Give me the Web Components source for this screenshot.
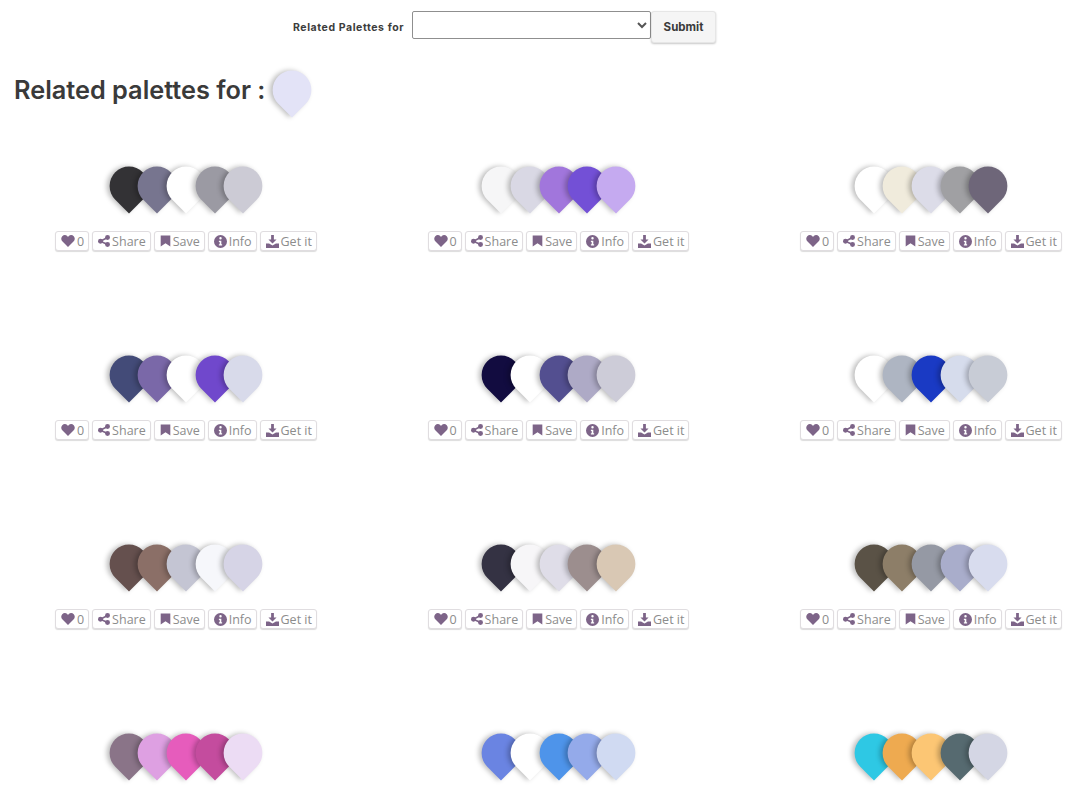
<!DOCTYPE html>
<html>
<head>
<meta charset="utf-8">
<title>Related palettes</title>
<style>
  html, body { margin: 0; padding: 0; background: #fff; overflow: hidden; height: 793px; }
</style>
</head>
<body>
<related-form></related-form>
<page-heading color="#e3e3f7">Related palettes for :</page-heading>
<palette-grid>
  <palette-card colors="#333235,#77758f,#ffffff,#9b9aa3,#cccbd5"></palette-card>
  <palette-card colors="#f6f6f7,#d9d8e4,#a176dc,#7350d6,#c5aaf0"></palette-card>
  <palette-card colors="#ffffff,#f0ebdc,#dcdce8,#a0a0a3,#6e6679"></palette-card>
  <palette-card colors="#434b78,#7a68a8,#ffffff,#7048cc,#d8daea"></palette-card>
  <palette-card colors="#120c40,#ffffff,#534f90,#aeaac6,#cdccd8"></palette-card>
  <palette-card colors="#ffffff,#aeb5c2,#1a3ac4,#d6dcec,#c8ccd6"></palette-card>
  <palette-card colors="#65504e,#8b6f67,#c4c5d3,#f6f7fb,#d6d4e6"></palette-card>
  <palette-card colors="#343243,#f7f6f8,#dfdde8,#9c8e8e,#d9c8b4"></palette-card>
  <palette-card colors="#5a5246,#8d7e68,#9599a4,#a9adcb,#d8dcee"></palette-card>
  <palette-card colors="#8a7488,#dea0e2,#e65cbc,#c44c9e,#ecdcf4" noactions></palette-card>
  <palette-card colors="#6a84e2,#ffffff,#4e94ea,#94aaea,#d0daf2" noactions></palette-card>
  <palette-card colors="#2ec8e4,#eeaa50,#fcc674,#566a70,#d4d6e4" noactions></palette-card>
</palette-grid>

<script>
const ICONS = {
  heart: '<svg viewBox="0 0 16 14" width="14" height="12"><path d="M8 14 1.600 7.700C-.4 5.700-.3 3 1.300 1.400 3-.3 5.500-.3 7.100 1.300L8 2.200l.9-.9c1.600-1.600 4.100-1.600 5.800.1 1.600 1.600 1.700 4.300-.3 6.300z"/></svg>',
  share: '<svg viewBox="0 0 16 16" width="12" height="12"><circle cx="3.300" cy="8.300" r="3.300"/><circle cx="12.700" cy="3.300" r="3.300"/><circle cx="12.700" cy="12.700" r="3.300"/><path d="M3.300 8.300 12.700 3.300M3.300 8.300l9.400 4.400" stroke-width="2" stroke="currentColor" fill="none"/></svg>',
  save: '<svg viewBox="0 0 16 16" width="11" height="12"><path d="M1 0h14v16l-7-4.600L1 16z"/></svg>',
  info: '<svg viewBox="0 0 16 16" width="13" height="13"><path fill-rule="evenodd" d="M8 0a8 8 0 1 1 0 16A8 8 0 0 1 8 0zm0 2.600a1.500 1.500 0 1 0 0 3 1.500 1.500 0 0 0 0-3zM6 7v1.500h1v3H6V13h4v-1.500H9V7z"/></svg>',
  download: '<svg viewBox="0 0 16 16" width="13" height="13"><path d="M6.300 0h3.400v5.500H13L8 10.500 3 5.500h3.300z"/><path d="M0 10.500h3.800L8 13l4.200-2.500H16V16H0z"/></svg>'
};

class RelatedForm extends HTMLElement {
  constructor() {
    super();
    this.attachShadow({ mode: 'open' });
    this.shadowRoot.innerHTML = `
      <style>
        :host { display: flex; align-items: flex-start; height: 44px; padding: 11px 0 0 293px; box-sizing: border-box; font-family: Inter, "Liberation Sans", sans-serif; color: #3c3c3c; }
        label { font-size: 10.500px; font-weight: 700; width: 119px; letter-spacing: .58px; line-height: 33px; white-space: nowrap; }
        select { width: 239px; height: 28px; background: #fff; border: 1px solid #8f8f8f; border-radius: 2px; box-sizing: border-box; margin: 0; color: #555; }
        button { width: 65px; height: 32px; background: #f5f5f5; border: 1px solid #e6e6e6; border-radius: 3px; box-shadow: 0 1px 2px rgba(0,0,0,.22); font: 700 11.500px Inter, "Liberation Sans", sans-serif; color: #3a3a3a; padding: 0; }
      </style>
      <label>Related Palettes for</label>
      <select><option></option></select>
      <button type="button">Submit</button>
    `;
  }
}

class PageHeading extends HTMLElement {
  constructor() {
    super();
    this.attachShadow({ mode: 'open' });
    const color = this.getAttribute('color');
    this.shadowRoot.innerHTML = `
      <style>
        :host { display: flex; align-items: flex-start; height: 122px; padding: 17px 0 0 14px; box-sizing: border-box; font-family: Inter, "Liberation Sans", sans-serif; }
        h1 { margin: 14px 0 0; font-size: 25.300px; line-height: 30px; font-weight: 600; color: #3a3a3a; white-space: nowrap; }
        palette-pin { margin: 10px 0 0 8px; }
      </style>
      <h1><slot></slot></h1>
      <palette-pin color="${color}"></palette-pin>
    `;
  }
}

class PaletteGrid extends HTMLElement {
  constructor() {
    super();
    this.attachShadow({ mode: 'open' });
    this.shadowRoot.innerHTML = `
      <style>
        :host { display: grid; grid-template-columns: repeat(3, 262px); column-gap: 110.500px; grid-auto-rows: 189px; padding-left: 55px; }
      </style>
      <slot></slot>
    `;
  }
}

class PalettePin extends HTMLElement {
  constructor() {
    super();
    this.attachShadow({ mode: 'open' });
    const color = this.getAttribute('color') || '#fff';
    this.shadowRoot.innerHTML = `
      <style>
        :host { display: block; width: 38px; height: 47px; flex: none; }
        div { width: 38px; height: 38px; background: ${color}; border-radius: 50% 50% 50% 0; transform: rotate(-45deg) scale(1.020); box-shadow: -2px -2px 5px rgba(0,0,0,.26); }
      </style>
      <div></div>
    `;
  }
}

class PaletteCard extends HTMLElement {
  constructor() {
    super();
    this.attachShadow({ mode: 'open' });
    const colors = (this.getAttribute('colors') || '').split(',');
    const pins = colors.map(c => `<palette-pin color="${c}"></palette-pin>`).join('');
    // last row's buttons fall below the fold, so they aren't rendered
    const actions = this.hasAttribute('noactions') ? '' : `
      <div class="actions">
        <action-button icon="heart">0</action-button>
        <action-button icon="share">Share</action-button>
        <action-button icon="save">Save</action-button>
        <action-button icon="info">Info</action-button>
        <action-button icon="download">Get it</action-button>
      </div>`;
    this.shadowRoot.innerHTML = `
      <style>
        :host { display: block; }
        .pins { display: flex; justify-content: center; height: 47px; padding-top: 1px; margin-bottom: 17px; }
        .pins palette-pin + palette-pin { margin-left: -9.300px; }
        .actions { display: flex; justify-content: space-between; }
      </style>
      <div class="pins">${pins}</div>
      ${actions}
    `;
  }
}

class ActionButton extends HTMLElement {
  constructor() {
    super();
    this.attachShadow({ mode: 'open' });
    this.shadowRoot.innerHTML = `
      <style>
        :host { display: inline-flex; align-items: center; gap: 2px; height: 20px; padding: 0 4px 0 5px; box-sizing: border-box; background: #fff; border: 1px solid #e0dde0; border-radius: 3px; box-shadow: 0 1px 1px rgba(0,0,0,.14); font: 12.500px "Open Sans", sans-serif; color: #8c8c8c; white-space: nowrap; }
        svg { fill: #7d6488; color: #7d6488; display: block; }
      </style>
      ${ICONS[this.getAttribute('icon')]}
      <slot></slot>
    `;
  }
}

customElements.define('palette-pin', PalettePin);
customElements.define('related-form', RelatedForm);
customElements.define('page-heading', PageHeading);
customElements.define('palette-grid', PaletteGrid);
customElements.define('palette-card', PaletteCard);
customElements.define('action-button', ActionButton);
</script>
</body>
</html>
